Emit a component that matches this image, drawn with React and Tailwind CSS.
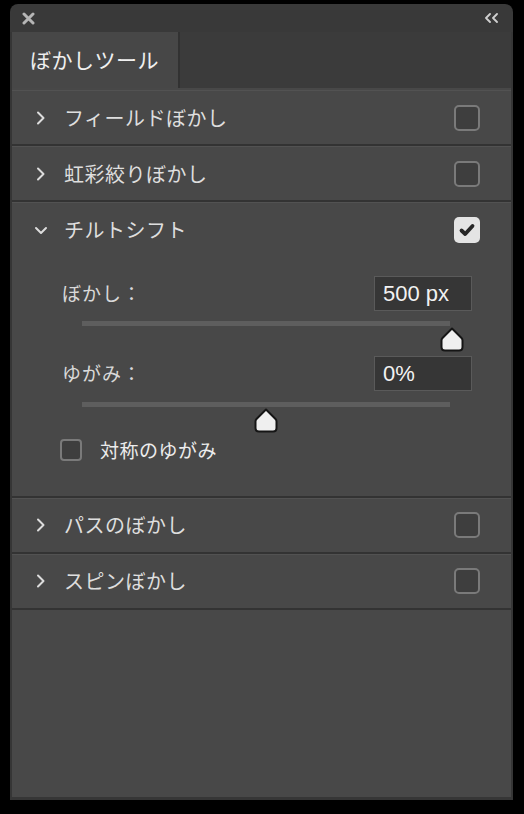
import React from "react";
import { useState } from "react";

function Chevron({ open }) {
     if (open) {
          return (
               <svg width="14" height="14" viewBox="0 0 14 14" className="shrink-0">
                    <path d="M2 5 L7 10 L12 5" fill="none" stroke="#dcdcdc" strokeWidth="2" strokeLinecap="round" strokeLinejoin="round" />
               </svg>
          );
     }
     return (
          <svg width="14" height="14" viewBox="0 0 14 14" className="shrink-0">
               <path d="M4 1.5 L9.5 7 L4 12.5" fill="none" stroke="#dcdcdc" strokeWidth="2" strokeLinecap="round" strokeLinejoin="round" />
          </svg>
     );
}

function Box({ checked, small }) {
     const size = small ? "w-[22px] h-[22px] rounded-[4px]" : "w-[26px] h-[26px] rounded-[5px]";
     if (checked) {
          return (
               <div className={`${size} bg-[#e4e4e4] flex items-center justify-center shrink-0`}>
                    <svg width="18" height="18" viewBox="0 0 18 18">
                         <path d="M3.5 9.5 L7.2 13 L14.5 5" fill="none" stroke="#262626" strokeWidth="3.8" strokeLinecap="round" strokeLinejoin="round" />
                    </svg>
               </div>
          );
     }
     return <div className={`${size} border-2 border-[#7a7a7a] bg-[#3e3e3e] shrink-0`} />;
}

function Thumb({ left }) {
     // pentagon-shaped slider handle
     return (
          <svg width="24" height="25" viewBox="0 0 24 25" className="absolute top-[6px]" style={{ left: left - 12 }}>
               <path d="M12 1.5 L21.5 11 Q22.5 12 22.5 13.5 L22.5 20 Q22.5 23.5 19 23.5 L5 23.5 Q1.5 23.5 1.5 20 L1.5 13.5 Q1.5 12 2.5 11 Z" fill="#efefef" stroke="#151515" strokeWidth="2" strokeLinejoin="round" />
          </svg>
     );
}

function Slider({ pos }) {
     return (
          <div className="relative ml-[70px] mr-[61px] h-[5px] bg-[#5e5e5e]">
               <Thumb left={pos} />
          </div>
     );
}

function Row({ label, open, checked, children }) {
     return (
          <div className="border-b-2 border-[#333333] shadow-[inset_0_1px_0_#525252]">
               <div className="h-[54px] flex items-center pl-[22px] pr-[31px] pt-[1px]">
                    <Chevron open={open} />
                    <span className="ml-[16px] text-[20px] text-[#dedede] tracking-[0.5px] flex-1">{label}</span>
                    <Box checked={checked} />
               </div>
               {children}
          </div>
     );
}

function Field({ label, value }) {
     return (
          <div className="flex items-center justify-between pl-[50px] pr-[39px]">
               <span className="text-[19px] text-[#d8d8d8] tracking-[1px]">{label}</span>
               <div className="w-[98px] h-[35px] bg-[#363636] border border-[#5a5a5a] flex items-center px-[8px] text-[22px] text-[#f2f2f2] font-['Liberation_Sans',sans-serif]">
                    {value}
               </div>
          </div>
     );
}

export default function App() {
     const [tilt] = useState(true);

     return (
          <div className="w-[524px] h-[814px] bg-black pt-[4px] pl-[10px] font-['Noto_Sans_CJK_JP','Liberation_Sans',sans-serif]">
               <div className="w-[503px] h-[796px] rounded-t-[8px] overflow-hidden flex flex-col bg-[#393939]">
                    {/* title bar */}
                    <div className="h-[28px] flex items-center justify-between pl-[12px] pr-[14px] shrink-0">
                         <svg width="13" height="13" viewBox="0 0 13 13">
                              <path d="M2 2 L11 11 M11 2 L2 11" stroke="#b5b5b5" strokeWidth="3" strokeLinecap="round" />
                         </svg>
                         <svg width="15" height="10" viewBox="0 0 15 10">
                              <path d="M6 1 L2 5 L6 9 M13 1 L9 5 L13 9" fill="none" stroke="#d0d0d0" strokeWidth="1.8" strokeLinecap="round" strokeLinejoin="round" />
                         </svg>
                    </div>

                    {/* tab row */}
                    <div className="h-[56px] flex bg-[#3b3b3b] border-x-2 border-[#363636] shrink-0">
                         <div className="w-[168px] bg-[#474747] border-r-2 border-[#323232] flex items-center pl-[18px] text-[21px] text-[#f0f0f0] tracking-[0.5px]">
                              ぼかしツール
                         </div>
                    </div>

                    {/* list */}
                    <div className="flex-1 bg-[#484848] border-x-2 border-b-[3px] border-[#363636] pt-[2px]">
                         <Row label="フィールドぼかし" checked={false} />
                         <Row label="虹彩絞りぼかし" checked={false} />
                         <Row label="チルトシフト" open={tilt} checked={true}>
                              <div className="pt-[20px] pb-[31px]">
                                   <Field label="ぼかし：" value="500 px" />
                                   <div className="mt-[10px]">
                                        <Slider pos={370} />
                                   </div>
                                   <div className="mt-[30px]">
                                        <Field label="ゆがみ：" value="0%" />
                                   </div>
                                   <div className="mt-[11px]">
                                        <Slider pos={184} />
                                   </div>
                                   <div className="mt-[29px] flex items-center pl-[48px]">
                                        <Box checked={false} small />
                                        <span className="ml-[18px] text-[19px] text-[#ececec] tracking-[0.5px]">対称のゆがみ</span>
                                   </div>
                              </div>
                         </Row>
                         <Row label="パスのぼかし" checked={false} />
                         <Row label="スピンぼかし" checked={false} />
                    </div>
               </div>
          </div>
     );
}
